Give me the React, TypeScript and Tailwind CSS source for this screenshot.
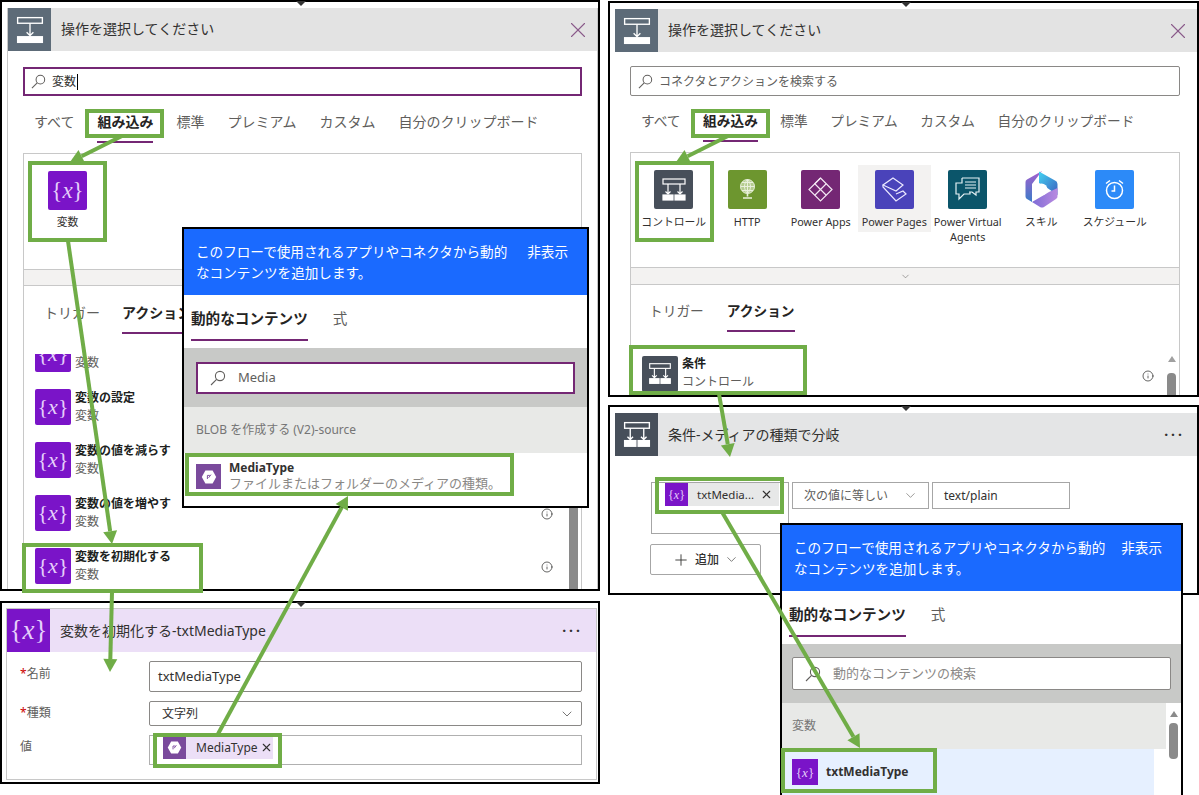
import { ChevronDown, Info, Plus, X } from 'lucide-react';
import type { ReactNode } from 'react';

const font = 'font-["Noto_Sans","Noto_Sans_CJK_JP",sans-serif]';
const DESC = 'ファイルまたはフォルダーのメディアの種類。';
const HINT = 'このフローで使用されるアプリやコネクタから動的なコンテンツを追加します。';

const Mag = ({ className = '' }: { className?: string }) => (
  <svg viewBox="0 0 16 16" className={className} fill="none" stroke="#605e5c" strokeWidth="1.1">
    <circle cx="10" cy="6" r="4.6" />
    <path d="M6.6 9.4 1 15" />
  </svg>
);

const VarIcon = ({ box, text, round = true }: { box: string; text: string; round?: boolean }) => (
  <div className={`${box} ${round ? 'rounded-[2px]' : ''} flex shrink-0 items-center justify-center bg-[#7a14c8] text-[#e5cffa]`}>
    <span className={`${text} font-["Liberation_Serif",serif] leading-none`}>
      {'{'}
      <i>x</i>
      {'}'}
    </span>
  </div>
);

const ControlIcon = ({ double = false, className = '' }: { double?: boolean; className?: string }) => (
  <svg viewBox="0 0 32 32" className={className} fill="none" stroke="#fff" strokeWidth="1.2">
    <rect x="5" y="5" width="22" height="5" />
    {double ? (
      <>
        <path d="M10 10v10M22 10v10M7.5 17.5 10 20l2.5-2.5M19.5 17.5 22 20l2.5-2.5" />
        <rect x="5" y="21" width="10" height="5" fill="#fff" />
        <rect x="17" y="21" width="10" height="5" fill="#fff" />
      </>
    ) : (
      <>
        <path d="M16 10v11M13 18l3 3 3-3" />
        <rect x="5" y="22" width="22" height="5" fill="#fff" />
      </>
    )}
  </svg>
);

const HttpIcon = () => (
  <svg viewBox="0 0 39 39" className="h-[39px] w-[39px] shrink-0 rounded-[2px] bg-[#6d962f]" fill="none" stroke="#e9f0dc" strokeWidth="1">
    <circle cx="19.5" cy="16.5" r="7" fill="#b5cc8f" />
    <path d="M12.5 16.5h14M19.5 9.5v14M14 12.5h11M14 20.5h11M19.5 9.5c-4 4-4 10 0 14M19.5 9.5c4 4 4 10 0 14" />
    <path d="M19.5 23.5v3M15 28h9" strokeWidth="1.6" />
  </svg>
);

const AppsIcon = () => (
  <svg viewBox="0 0 39 39" className="h-[39px] w-[39px] shrink-0 rounded-[2px] bg-[#742774]" fill="none" stroke="#f2e6f2" strokeWidth="1.2">
    <path d="M19.5 8 31 19.5 19.5 31 8 19.5Z" />
    <path d="M19.5 8 13.75 13.75 25.25 25.25M25.25 13.75 13.75 25.25" />
  </svg>
);

const PagesIcon = () => (
  <svg viewBox="0 0 39 39" className="h-[39px] w-[39px] shrink-0 rounded-[2px] bg-[#4a43ba]" fill="none" stroke="#ece9ff" strokeWidth="1.2">
    <path d="M18 8 28 15 21 21 8 15Z" />
    <path d="M8 15v2l13 14 10-7-3-3-7 3" />
  </svg>
);

const VirtualIcon = () => (
  <svg viewBox="0 0 39 39" className="h-[39px] w-[39px] shrink-0 rounded-[2px] bg-[#0b556a]" fill="none" stroke="#e5f1f4" strokeWidth="1.2">
    <path d="M14 8h17v14h-3v3l-4-3h-3M17 12h11M17 15h11M17 18h11" />
    <path d="M14 8v5H8v11h3v5l5-5h6v-2" />
  </svg>
);

const SkillIcon = () => (
  <svg viewBox="0 0 33 39" className="h-[39px] w-[33px] shrink-0">
    <defs>
      <linearGradient id="skillA" x1="0" y1="0" x2="0" y2="1">
        <stop offset="0" stopColor="#a65fce" />
        <stop offset="1" stopColor="#3a7cc8" />
      </linearGradient>
      <linearGradient id="skillB" x1="0" y1="0" x2="1" y2="1">
        <stop offset="0" stopColor="#43d3f2" />
        <stop offset="1" stopColor="#3c5fbf" />
      </linearGradient>
      <linearGradient id="skillC" x1="0" y1="0" x2="1" y2="0">
        <stop offset="0" stopColor="#7f6cd6" />
        <stop offset="1" stopColor="#b98ae0" />
      </linearGradient>
    </defs>
    <path d="M17 1 2 9.5a3 3 0 0 0-1.5 3v14a3 3 0 0 0 1.5 2.5l5 3V14Z" fill="url(#skillA)" />
    <path d="M14 1.5 30 10.5a4 4 0 0 1 2.5 3.5v11l-9.5-6.5L14 13Z" fill="url(#skillB)" />
    <path d="M32.5 18v8a3 3 0 0 1-1.5 3l-12 8a4 4 0 0 1-4 0L7 32l12-7 5-3Z" fill="url(#skillC)" />
    <circle cx="16.5" cy="19.5" r="6" fill="#fff" />
  </svg>
);

const ClockIcon = () => (
  <svg viewBox="0 0 39 39" className="h-[39px] w-[39px] shrink-0 rounded-[2px] bg-[#2c8af8]" fill="none" stroke="#fff" strokeWidth="1.5">
    <circle cx="19.5" cy="20.5" r="8" />
    <path d="M19.5 15.5v5.5h-3M11 13.5l4-3M28 13.5l-4-3" />
  </svg>
);

const DynIcon = ({ box, hex }: { box: string; hex: string }) => (
  <div className={`${box} flex shrink-0 items-center justify-center bg-[#7a4a9c]`}>
    <svg viewBox="0 0 20 20" className={hex}>
      <path d="M5.5 2h9L19 10l-4.5 8h-9L1 10Z" fill="#fff" />
      <path d="M8 12.5V8h3M12.5 7 9.5 11" stroke="#7a4a9c" strokeWidth="1.2" fill="none" />
    </svg>
  </div>
);

const Tab = ({ on, children, line }: { on?: boolean; children: ReactNode; line: string }) => (
  <div className="relative whitespace-nowrap">
    <span className={on ? 'font-bold text-[#252423]' : 'text-[#605e5c]'}>{children}</span>
    {on && <div className={`absolute inset-x-0 ${line} h-[2px] bg-[#742774]`} />}
  </div>
);

const ListRow = ({ title }: { title: string }) => (
  <div className="flex h-[53px] items-center">
    <VarIcon box="h-[36px] w-[36px]" text="text-[22px]" />
    <div className="ml-[4px] flex flex-col text-[12px] leading-[18px]">
      <span className="font-bold text-[#201f1e]">{title}</span>
      <span className="text-[#605e5c]">変数</span>
    </div>
  </div>
);

const Popup = ({ place, children }: { place: string; children: ReactNode }) => (
  <div className={`absolute z-10 flex flex-col border-2 border-black bg-white ${place}`}>
    <div className="relative h-[66px] shrink-0 bg-[#1a6aff] pl-[12px] pt-[12px] text-[13.6px] leading-[21px] text-white">
      <div className="w-[322px]">{HINT}</div>
      <span className="absolute right-[19px] top-[12px]">非表示</span>
    </div>
    <div className="mt-[13px] flex h-[37px] shrink-0 items-start gap-[25px] pl-[7px] text-[14.6px] leading-[20px]">
      <Tab on line="-bottom-[13px]">動的なコンテンツ</Tab>
      <span className="text-[#605e5c]">式</span>
    </div>
    {children}
  </div>
);

const GreenBox = ({ place }: { place: string }) => (
  <div className={`pointer-events-none absolute z-20 border-[4px] border-[#70ad47] ${place}`} />
);

const Arrow = ({ a, b }: { a: [number, number]; b: [number, number] }) => {
  const len = Math.hypot(b[0] - a[0], b[1] - a[1]);
  const ux = (b[0] - a[0]) / len;
  const uy = (b[1] - a[1]) / len;
  const bx = b[0] - ux * 13;
  const by = b[1] - uy * 13;
  const px = -uy * 7;
  const py = ux * 7;
  return (
    <>
      <line x1={a[0]} y1={a[1]} x2={bx} y2={by} stroke="#70ad47" strokeWidth="4" />
      <polygon points={`${b[0]},${b[1]} ${bx + px},${by + py} ${bx - px},${by - py}`} fill="#70ad47" />
    </>
  );
};

const Notch = ({ place }: { place: string }) => (
  <div className={`absolute z-10 h-0 w-0 border-x-[5px] border-t-[5px] border-x-transparent border-t-[#333] ${place}`} />
);

const PickerHead = () => (
  <div className="flex h-[43px] shrink-0 items-center bg-[#e3e3e3]">
    <div className="flex h-full w-[43px] items-center justify-center bg-[#5d6b78]">
      <ControlIcon className="h-[36px] w-[36px]" />
    </div>
    <span className="mb-[2px] ml-[10px] text-[14px] text-[#323130]">操作を選択してください</span>
    <X size={26} strokeWidth={1} className="ml-auto mr-[6px] text-[#8a5a8a]" />
  </div>
);

const Cat = ({ label, hi, children }: { label: string; hi?: boolean; children: ReactNode }) => (
  <div className={`flex h-[67px] w-[73.5px] flex-col items-center pt-[5px] ${hi ? 'bg-[#f3f2f1]' : ''}`}>
    {children}
    <span className="mt-[5px] text-center text-[10.8px] leading-[15px] text-[#323130]">{label}</span>
  </div>
);

export default function App() {
  return (
    <div className={`relative flex h-[795px] w-[1199px] gap-[8px] overflow-hidden bg-white ${font}`}>
      {/* left column */}
      <div className="flex w-[600px] shrink-0 flex-col gap-[10px]">
        <div className="relative flex h-[591px] shrink-0 flex-col border-2 border-black pl-[5px] pt-[6px]">
          <Notch place="left-[294px] -top-[1px]" />
          <div className="flex min-h-0 flex-1 flex-col border-l border-r border-[#c8c8c8]">
            <PickerHead />
            <div className="mx-[15px] mt-[16px] flex h-[29px] shrink-0 items-center border-2 border-[#742774] pl-[6px]">
              <Mag className="h-[15px] w-[15px]" />
              <span className="ml-[6px] border-r border-black pr-[1px] text-[12px] leading-[16px] text-[#323130]">変数</span>
            </div>
            <div className="ml-[26px] mt-[16px] flex h-[20px] shrink-0 gap-[23px] text-[14px] leading-[20px]">
              <Tab line="-bottom-[11px]">すべて</Tab>
              <Tab on line="-bottom-[11px]">組み込み</Tab>
              <Tab line="-bottom-[11px]">標準</Tab>
              <Tab line="-bottom-[11px]">プレミアム</Tab>
              <Tab line="-bottom-[11px]">カスタム</Tab>
              <Tab line="-bottom-[11px]">自分のクリップボード</Tab>
            </div>
            <div className="mx-[15px] mt-[21px] flex min-h-0 flex-1 flex-col overflow-hidden border-x border-t border-[#c8c8c8]">
              <div className="h-[115px] shrink-0 pl-[24px] pt-[17px]">
                <VarIcon box="h-[39px] w-[39px]" text="text-[23px]" />
                <div className="mt-[4px] w-[39px] text-center text-[10.8px] text-[#323130]">変数</div>
              </div>
              <div className="h-[17px] shrink-0 border-y border-[#c8c8c8] bg-[#f3f2f1]" />
              <div className="ml-[20px] mt-[17px] flex h-[20px] shrink-0 gap-[22px] text-[14px] leading-[20px]">
                <Tab line="-bottom-[11px]">トリガー</Tab>
                <Tab on line="-bottom-[11px]">アクション</Tab>
              </div>
              <div className="mt-[31px] flex min-h-0 flex-1 overflow-hidden pl-[11px]">
                <div className="-mt-[27px] flex-1">
                  <ListRow title={'\u00a0'} />
                  <ListRow title="変数の設定" />
                  <ListRow title="変数の値を減らす" />
                  <ListRow title="変数の値を増やす" />
                  <ListRow title="変数を初期化する" />
                </div>
                <div className="mr-[3px] mt-[140px] h-[100px] w-[9px] shrink-0 bg-[#8a8a8a]" />
              </div>
            </div>
          </div>
          <Info size={12} strokeWidth={1.5} className="absolute left-[539px] top-[506px] text-[#323130]" />
          <Info size={12} strokeWidth={1.5} className="absolute left-[539px] top-[559px] text-[#323130]" />
        </div>

        <div className="relative flex h-[183px] shrink-0 flex-col border-2 border-black pb-[2px] pl-[4px] pr-[1px] pt-[5px]">
          <Notch place="left-[294px] -top-[1px]" />
          <div className="flex flex-1 flex-col border border-[#c8c8c8]">
            <div className="flex h-[43px] shrink-0 items-center bg-[#ecdff7]">
              <VarIcon box="h-[43px] w-[43px]" text="text-[27px]" round={false} />
              <span className="ml-[10px] text-[14px] text-[#323130]">変数を初期化する-txtMediaType</span>
              <span className="ml-auto mr-[13px] text-[14px] font-bold tracking-[3px] text-[#323130]">···</span>
            </div>
            <div className="flex flex-col gap-[9px] pl-[13px] pr-[14px] pt-[9px] text-[12px] text-[#605e5c]">
              <div className="flex items-start">
                <span className="w-[129px] pt-[4px]"><span className="text-[#c00]">*</span>名前</span>
                <div className="flex h-[31px] flex-1 items-center rounded-[2px] border border-[#8a8886] pl-[8px] text-[13px] text-[#323130]">txtMediaType</div>
              </div>
              <div className="flex items-start">
                <span className="w-[129px] pt-[3px]"><span className="text-[#c00]">*</span>種類</span>
                <div className="flex h-[25px] flex-1 items-center justify-between rounded-[2px] border border-[#8a8886] pl-[12px] pr-[6px] text-[12px] text-[#323130]">
                  文字列
                  <ChevronDown size={16} strokeWidth={1} />
                </div>
              </div>
              <div className="flex items-start">
                <span className="w-[129px] pt-[3px]">値</span>
                <div className="flex h-[30px] flex-1 items-start border border-[#b0b0b0] pl-[13px]">
                  <div className="flex h-[23px] w-[110px] items-center bg-[#ecdff7]">
                    <DynIcon box="h-[23px] w-[23px]" hex="h-[15px] w-[15px]" />
                    <span className="ml-[10px] text-[12px] text-[#323130]">MediaType</span>
                    <X size={13} className="ml-[2px] text-[#323130]" />
                  </div>
                </div>
              </div>
            </div>
          </div>
        </div>
      </div>

      {/* right column */}
      <div className="flex flex-1 flex-col gap-[8px] pt-[1px]">
        <div className="relative flex h-[396px] shrink-0 flex-col border-2 border-black pl-[5px] pt-[6px]">
          <Notch place="left-[291px] -top-[1px]" />
          <div className="flex min-h-0 flex-1 flex-col">
            <PickerHead />
            <div className="ml-[15px] mr-[17px] mt-[14px] flex h-[30px] shrink-0 items-center rounded-[2px] border border-[#8a8886] pl-[7px]">
              <Mag className="h-[15px] w-[15px]" />
              <span className="ml-[6px] pt-[1px] text-[12px] text-[#605e5c]">コネクタとアクションを検索する</span>
            </div>
            <div className="ml-[26px] mt-[15px] flex h-[20px] shrink-0 gap-[22.5px] text-[13.7px] leading-[20px]">
              <Tab line="-bottom-[11px]">すべて</Tab>
              <Tab on line="-bottom-[11px]">組み込み</Tab>
              <Tab line="-bottom-[11px]">標準</Tab>
              <Tab line="-bottom-[11px]">プレミアム</Tab>
              <Tab line="-bottom-[11px]">カスタム</Tab>
              <Tab line="-bottom-[11px]">自分のクリップボード</Tab>
            </div>
            <div className="ml-[15px] mr-[17px] mt-[21px] flex min-h-0 flex-1 flex-col overflow-hidden border-x border-t border-[#c8c8c8]">
              <div className="flex h-[114px] shrink-0 items-start pl-[6px] pt-[12px]">
                <Cat label="コントロール">
                  <div className="flex h-[39px] w-[39px] shrink-0 items-center justify-center rounded-[2px] bg-[#474f5a]">
                    <ControlIcon double className="h-[32px] w-[32px]" />
                  </div>
                </Cat>
                <Cat label="HTTP"><HttpIcon /></Cat>
                <Cat label="Power Apps"><AppsIcon /></Cat>
                <Cat label="Power Pages" hi><PagesIcon /></Cat>
                <Cat label="Power Virtual Agents"><VirtualIcon /></Cat>
                <Cat label="スキル"><SkillIcon /></Cat>
                <Cat label="スケジュール"><ClockIcon /></Cat>
              </div>
              <div className="flex h-[18px] shrink-0 items-center justify-center border-y border-[#c8c8c8] bg-[#f3f2f1]">
                <ChevronDown size={11} strokeWidth={1.2} className="text-[#605e5c]" />
              </div>
              <div className="ml-[18px] mt-[16px] flex h-[20px] shrink-0 gap-[23px] text-[13.7px] leading-[20px]">
                <Tab line="-bottom-[11px]">トリガー</Tab>
                <Tab on line="-bottom-[11px]">アクション</Tab>
              </div>
              <div className="mt-[35px] flex flex-1 pl-[11px] pr-[3px]">
                <div className="flex h-[36px] w-[36px] shrink-0 items-center justify-center rounded-[2px] bg-[#474f5a]">
                  <ControlIcon double className="h-[30px] w-[30px]" />
                </div>
                <div className="-mt-[1px] ml-[4px] flex flex-col text-[12px] leading-[18px]">
                  <span className="font-bold text-[#201f1e]">条件</span>
                  <span className="text-[#605e5c]">コントロール</span>
                </div>
                <Info size={12} strokeWidth={1.5} className="ml-auto mr-[13px] mt-[14px] text-[#323130]" />
                <div className="flex w-[9px] flex-col items-center">
                  <div className="h-0 w-0 border-x-[4px] border-b-[6px] border-x-transparent border-b-[#a0a0a0]" />
                  <div className="mt-[11px] h-[30px] w-[9px] rounded-t-[4px] bg-[#8a8a8a]" />
                </div>
              </div>
            </div>
          </div>
        </div>

        <div className="relative flex h-[190px] shrink-0 flex-col border-2 border-black pl-[5px] pt-[6px]">
          <Notch place="left-[291px] -top-[1px]" />
          <div className="flex flex-1 flex-col">
            <div className="flex h-[43px] shrink-0 items-center bg-[#e4e5e6]">
              <div className="flex h-full w-[43px] items-center justify-center bg-[#474f5a]">
                <ControlIcon double className="h-[36px] w-[36px]" />
              </div>
              <span className="ml-[10px] text-[14px] text-[#323130]">条件-メディアの種類で分岐</span>
              <span className="ml-auto mr-[12px] text-[14px] font-bold tracking-[3px] text-[#323130]">···</span>
            </div>
            <div className="ml-[36px] mt-[26px] flex h-[52px] items-start gap-[3px]">
              <div className="h-[52px] w-[138px] border border-[#a6a6a6] pl-[13px]">
                <div className="flex h-[23px] w-[114px] items-center bg-[#e7e8e8]">
                  <VarIcon box="h-[23px] w-[23px]" text="text-[12px]" round={false} />
                  <span className="ml-[9px] text-[11.5px] text-[#323130]">txtMedia...</span>
                  <X size={13} className="ml-[6px] text-[#323130]" />
                </div>
              </div>
              <div className="flex h-[27px] w-[137px] items-center justify-between border border-[#a6a6a6] pl-[11px] pr-[10px] text-[12px] text-[#605e5c]">
                次の値に等しい
                <ChevronDown size={15} strokeWidth={1} />
              </div>
              <div className="flex h-[27px] w-[138px] items-center border border-[#a6a6a6] pl-[11px] text-[12px] text-[#323130]">text/plain</div>
            </div>
            <div className="ml-[35px] mt-[10px] flex h-[31px] w-[111px] items-center justify-center gap-[5px] rounded-[2px] border border-[#a6a6a6] text-[12px] font-medium text-[#323130]">
              <Plus size={18} strokeWidth={1.2} />
              追加
              <ChevronDown size={15} strokeWidth={1} />
            </div>
          </div>
        </div>
      </div>

      {/* dynamic content pickers lying over the cards */}
      <Popup place="left-[182px] top-[227px] h-[281px] w-[407px]">
        <div className="mt-[3px] flex h-[59px] shrink-0 items-center bg-[#c8c9c7] px-[12px]">
          <div className="flex h-[32px] flex-1 items-center border-2 border-[#742774] bg-white pl-[12px]">
            <Mag className="h-[16px] w-[16px]" />
            <span className="ml-[12px] text-[13px] text-[#605e5c]">Media</span>
          </div>
        </div>
        <div className="flex h-[46px] shrink-0 items-center bg-[#e8e9e7] pl-[12px] text-[12px] text-[#757575]">BLOB を作成する (V2)-source</div>
        <div className="flex items-start pl-[12px] pt-[11px]">
          <DynIcon box="h-[25px] w-[25px]" hex="h-[16px] w-[16px]" />
          <div className="-mt-[4px] ml-[8px] flex flex-col">
            <span className="text-[12px] font-bold leading-[15px] text-[#323130]">MediaType</span>
            <span className="text-[13px] leading-[16px] text-[#8a8886]">{DESC}</span>
          </div>
        </div>
      </Popup>

      <Popup place="left-[780px] top-[523px] h-[274px] w-[403px]">
        <div className="mt-[3px] flex h-[59px] shrink-0 items-center bg-[#c8c9c7] px-[10px]">
          <div className="flex h-[33px] flex-1 items-center rounded-[2px] border border-[#8a8886] bg-white pl-[12px]">
            <Mag className="h-[16px] w-[16px]" />
            <span className="ml-[12px] text-[13px] text-[#8a8886]">動的なコンテンツの検索</span>
          </div>
        </div>
        <div className="flex min-h-0 flex-1">
          <div className="flex flex-1 flex-col">
            <div className="flex h-[46px] shrink-0 items-center bg-[#e8e9e7] pl-[10px] text-[12px] text-[#757575]">変数</div>
            <div className="mr-[12px] flex flex-1 items-start bg-[#e6f0ff] pl-[10px] pt-[10px]">
              <VarIcon box="h-[26px] w-[26px]" text="text-[13px]" round={false} />
              <span className="ml-[8px] pt-[4px] text-[12px] font-bold text-[#323130]">txtMediaType</span>
            </div>
          </div>
          <div className="flex w-[15px] shrink-0 flex-col items-center bg-white pt-[8px]">
            <div className="h-0 w-0 border-x-[4px] border-b-[6px] border-x-transparent border-b-[#8a8a8a]" />
            <div className="mt-[6px] h-[36px] w-[9px] rounded-[4px] bg-[#8a8a8a]" />
          </div>
        </div>
      </Popup>

      {/* annotations */}
      <GreenBox place="left-[85px] top-[109px] h-[29px] w-[79px]" />
      <GreenBox place="left-[28px] top-[161px] h-[81px] w-[79px]" />
      <GreenBox place="left-[22px] top-[543px] h-[50px] w-[181px]" />
      <GreenBox place="left-[185px] top-[453px] h-[43px] w-[329px]" />
      <GreenBox place="left-[153px] top-[733px] h-[35px] w-[129px]" />
      <GreenBox place="left-[691px] top-[109px] h-[29px] w-[79px]" />
      <GreenBox place="left-[635px] top-[161px] h-[81px] w-[79px]" />
      <GreenBox place="left-[629px] top-[345px] h-[50px] w-[178px]" />
      <GreenBox place="left-[655px] top-[477px] h-[37px] w-[129px]" />
      <GreenBox place="left-[781px] top-[748px] h-[45px] w-[156px]" />
      <svg viewBox="0 0 1199 795" className="pointer-events-none absolute inset-0 z-30 h-[795px] w-[1199px]">
        <Arrow a={[122, 136]} b={[70, 162]} />
        <Arrow a={[68, 241]} b={[112, 544]} />
        <Arrow a={[112, 592]} b={[110, 672]} />
        <Arrow a={[218, 734]} b={[348, 496]} />
        <Arrow a={[728, 136]} b={[676, 162]} />
        <Arrow a={[719, 394]} b={[730, 457]} />
        <Arrow a={[722, 512]} b={[860, 748]} />
      </svg>
    </div>
  );
}
